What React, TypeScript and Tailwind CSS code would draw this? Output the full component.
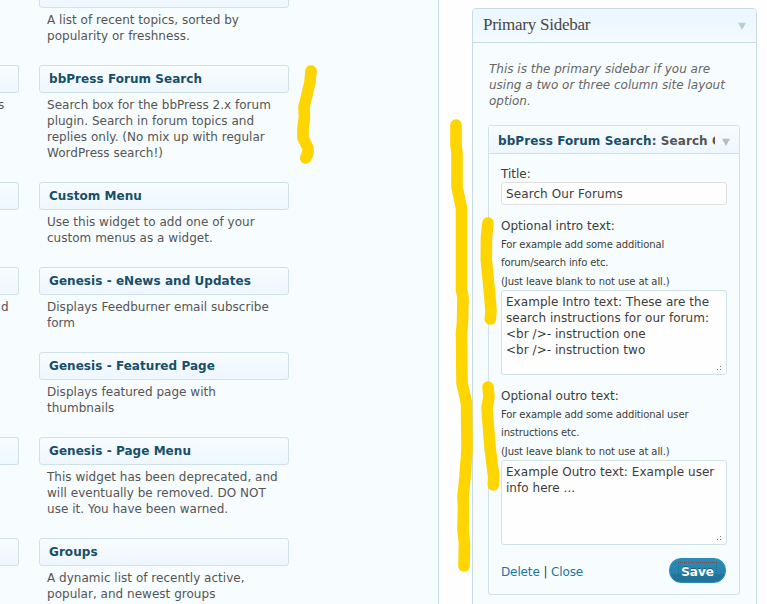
import React from 'react';

type Widget = { title: string; lines: string[]; left: string | null };

const widgets: Widget[] = [
  { title: '', lines: ['A list of recent topics, sorted by', 'popularity or freshness.'], left: null },
  {
    title: 'bbPress Forum Search',
    lines: [
      'Search box for the bbPress 2.x forum',
      'plugin. Search in forum topics and',
      'replies only. (No mix up with regular',
      'WordPress search!)',
    ],
    left: 's',
  },
  { title: 'Custom Menu', lines: ['Use this widget to add one of your', 'custom menus as a widget.'], left: '' },
  { title: 'Genesis - eNews and Updates', lines: ['Displays Feedburner email subscribe', 'form'], left: 'd' },
  { title: 'Genesis - Featured Page', lines: ['Displays featured page with', 'thumbnails'], left: null },
  {
    title: 'Genesis - Page Menu',
    lines: [
      'This widget has been deprecated, and',
      'will eventually be removed. DO NOT',
      'use it. You have been warned.',
    ],
    left: '',
  },
  { title: 'Groups', lines: ['A dynamic list of recently active,', 'popular, and newest groups'], left: '' },
];

const bar = 'h-7 border border-[#d0e2e9] bg-linear-to-b from-[#f7fcfe] to-[#eef6ff]';

function WidgetRow({ title, lines, left }: Widget) {
  return (
    <div className="flex shrink-0 gap-5 pb-[21px]">
      <div className="w-[19px] shrink-0">
        {left !== null && <div className={`${bar} rounded-r-[3px] border-l-0`} />}
        {left && (
          <div className={`pt-1 ${left === 's' ? '-ml-[2px]' : 'ml-px'}`}>{left}</div>
        )}
      </div>
      <div className="w-[250px] shrink-0">
        <div className={`${bar} rounded-[3px] px-[9px] font-bold leading-[27px] tracking-[0.05px] text-[#174f69]`}>{title}</div>
        <div className="pt-1 pl-2 tracking-[0.02px] whitespace-nowrap">
          {lines.map((line) => (
            <div key={line}>{line}</div>
          ))}
        </div>
      </div>
    </div>
  );
}

function Arrow({ color }: { color: string }) {
  return (
    <svg width="8" height="8" viewBox="0 0 8 8" className="shrink-0" fill={color}>
      <path d="M0 0.8H8L4 8Z" />
    </svg>
  );
}

function TextBlock({ label, hints, value }: { label: string; hints: string[]; value: string[] }) {
  return (
    <div>
      <div className="h-[18px] pt-px leading-[18px]">{label}</div>
      <div className="h-[56px] pt-[2px] text-[10px] leading-[18px] tracking-[-0.13px] whitespace-nowrap">
        <div>{hints[0]}</div>
        <div>{hints[1]}</div>
        <div className="pt-px tracking-[-0.09px]">{hints[2]}</div>
      </div>
      <div className="flex h-[85px] w-[226px] flex-col justify-between rounded-[3px] border border-[#d0e2e9] bg-[#fefefe] pt-[3px] pr-1 pb-1 pl-1 leading-4 tracking-[0.04px] whitespace-nowrap">
        <div>
          {value.map((line) => (
            <div key={line}>{line}</div>
          ))}
        </div>
        <svg width="5" height="5" viewBox="0 0 5 5" className="self-end" fill="#777">
          <path d="M0 4h1v1H0zM3 1h1v1H3zM3 4h1v1H3z" />
        </svg>
      </div>
    </div>
  );
}

export default function App() {
  return (
    <div className="relative flex h-[604px] w-[767px] overflow-hidden bg-[#fefefe] font-['DejaVu_Sans',sans-serif] text-[12px] leading-4 text-[#555]">
      <div className="flex w-[439px] shrink-0 flex-col overflow-hidden border-r border-[#cbe0e6] bg-[#f7fcfe]">
        <div className="-mt-5 flex flex-col">
          {widgets.map((w, i) => (
            <WidgetRow key={i} {...w} />
          ))}
        </div>
      </div>

      <div className="mt-2 ml-[33px] h-[620px] w-[285px] shrink-0 rounded-t-[4px] border border-[#c7dce4] bg-[#f7fcfe]">
        <div className="flex h-[34px] items-center justify-between rounded-t-[3px] border-b border-[#c7dce4] bg-linear-to-b from-[#ecf7ff] from-30% to-[#f5fafc] pr-[10px] pl-[10px]">
          <h3 className="pb-px font-['Liberation_Serif',serif] text-[17px] leading-[30px] tracking-[-0.25px] text-[#464646]">
            Primary Sidebar
          </h3>
          <Arrow color="#b8cdd6" />
        </div>
        <p className="mt-[18px] ml-4 text-[12px] leading-4 whitespace-nowrap text-[#666] italic">
          This is the primary sidebar if you are
          <br />
          using a two or three column site layout
          <br />
          option.
        </p>
        <div className="mt-[16px] ml-[15px] h-[470px] w-[252px] rounded-[3px] border border-[#d0e2e9]">
          <div className="flex h-7 items-center justify-between border-b border-[#d0e2e9] bg-linear-to-b from-[#f7fcfe] to-[#eef6ff] pr-[9px] pl-[9px] font-bold">
            <div className="w-[217px] overflow-hidden pt-[3px] tracking-[0.08px] whitespace-nowrap text-[#555]">
              <span className="text-[#174f69]">bbPress Forum Search</span>: Search Our Forums
            </div>
            <div className="pt-1">
              <Arrow color="#bbb" />
            </div>
          </div>
          <div className="pt-[11px] pl-3 text-[#3c3c3c]">
            <div className="h-[17px] pt-px leading-[17px]">Title:</div>
            <div className="h-[23px] w-[226px] rounded-[3px] border border-[#dfdfdf] bg-[#fefefe] px-1 leading-[22px] tracking-[0.1px]">
              Search Our Forums
            </div>
            <div className="pt-[11px]">
              <TextBlock
                label="Optional intro text:"
                hints={['For example add some additional', 'forum/search info etc.', '(Just leave blank to not use at all.)']}
                value={[
                  'Example Intro text: These are the',
                  'search instructions for our forum:',
                  '<br />- instruction one',
                  '<br />- instruction two',
                ]}
              />
            </div>
            <div className="pt-[11px]">
              <TextBlock
                label="Optional outro text:"
                hints={['For example add some additional user', 'instructions etc.', '(Just leave blank to not use at all.)']}
                value={['Example Outro text: Example user', 'info here ...']}
              />
            </div>
            <div className="mt-[13px] flex h-[25px] w-[225px] items-center justify-between">
              <div className="pt-[3px] tracking-[-0.12px]">
                <a className="text-[#21759b]">Delete</a> | <a className="text-[#21759b]">Close</a>
              </div>
              <button className="flex h-[25px] w-[57px] items-center justify-center rounded-[12px] border border-[#298cba] bg-linear-to-b from-[#298cba] via-[#2781ab] via-65% to-[#24749a] to-65% font-bold text-white [text-shadow:0_-1px_0_rgba(0,0,0,0.3)]">
                <span className="h-[18px] w-[39px] border border-dotted border-[#754f48] leading-[18px]">Save</span>
              </button>
            </div>
          </div>
        </div>
      </div>

      <svg
        className="pointer-events-none absolute top-0 left-0"
        width="767"
        height="604"
        fill="none"
        stroke="#ffd500"
        strokeWidth="11.6"
        strokeLinecap="round"
        strokeLinejoin="round"
      >
        <path d="M311 71L310 82L306.5 97L304 107L304.5 117L303 128L303 138L308 148L308 153L305.7 158" />
        <path d="M456 125V145L457 153V187L461.5 208V290L463 297L462.5 323L461.5 333L462 383L466.5 403L467 450L465 477L463 497L463.5 507L463 530L464.5 543L464 566" />
        <path d="M488 223L486.5 237L486.3 260L489 287L491 310L490.3 319" />
        <path d="M488 387L489 397L487 408L490 447L493.7 477L493.3 485" />
      </svg>
    </div>
  );
}
